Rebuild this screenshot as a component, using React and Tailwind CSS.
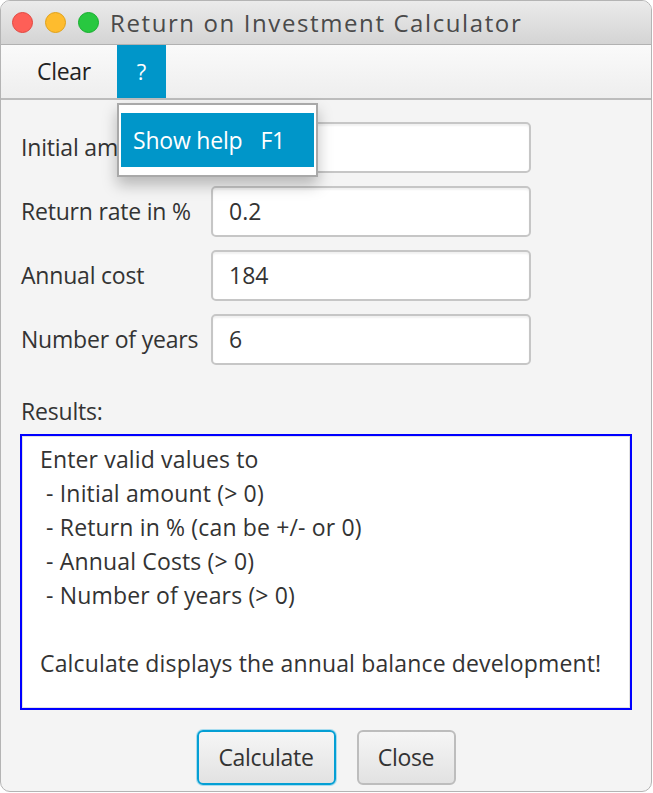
const fields = [
  { label: "Initial amount", value: "1000" },
  { label: "Return rate in %", value: "0.2" },
  { label: "Annual cost", value: "184" },
  { label: "Number of years", value: "6" },
];

const lines = [
  "Enter valid values to",
  " - Initial amount (> 0)",
  " - Return in % (can be +/- or 0)",
  " - Annual Costs (> 0)",
  " - Number of years (> 0)",
  "",
  "Calculate displays the annual balance development!",
];

const App = () => {
  return (
    <div className="w-[653px] h-[793px] bg-white font-['Open_Sans',sans-serif] text-[#333]">
      <div className="relative w-[652px] h-[792px] rounded-[10px] border border-[#b4b4b4] bg-[#f4f4f4] overflow-hidden flex flex-col">

        {/* Title bar */}
        <div className="h-[44px] flex items-center bg-gradient-to-b from-[#ebebeb] to-[#d4d4d4] border-b border-[#b1b1b1] shrink-0">
          <div className="flex items-center gap-[12px] pl-[11px]">
            <span className="w-[21px] h-[21px] rounded-full bg-[#fe5f57] border border-[#e2463f]" />
            <span className="w-[21px] h-[21px] rounded-full bg-[#febc2e] border border-[#e1a116]" />
            <span className="w-[21px] h-[21px] rounded-full bg-[#28c840] border border-[#14ae2c]" />
          </div>
          <span className="ml-[11px] text-[24px] tracking-[1.6px] text-[#4a4a4a]">Return on Investment Calculator</span>
        </div>

        {/* Menu bar */}
        <div className="h-[55px] flex items-stretch bg-gradient-to-b from-[#fafafa] to-[#eeeeee] border-b-2 border-[#bcbcbc] shrink-0">
          <div className="w-[116px] flex items-center pl-[36px] text-[23px] tracking-[-0.3px] text-[#222]">Clear</div>
          <div className="w-[49px] flex items-center justify-center bg-[#0096c9] text-white text-[22px]">?</div>
        </div>

        {/* Form */}
        <div className="flex flex-col gap-[13px] pt-[22px] pl-[20px]">
          {fields.map((f) => (
            <div key={f.label} className="flex items-center h-[51px]">
              <span className="w-[190px] text-[23px] tracking-[-0.2px] text-[#333]">{f.label}</span>
              <div className="w-[320px] h-[51px] flex items-center px-[16px] bg-white border-2 border-[#c6c6c6] rounded-[5px] shadow-[inset_0_2px_2px_rgba(0,0,0,0.06)] text-[23px] text-[#333]">
                {f.value}
              </div>
            </div>
          ))}
        </div>

        <div className="pl-[20px] pt-[33px] text-[23px] tracking-[-0.2px] text-[#333] leading-[26px]">Results:</div>

        <div className="mx-[19px] mt-[10px] h-[276px] border-2 border-[#0000ff] bg-white">
          <div className="h-full border border-[#e2e2e2] pt-[5px] pl-[17px] text-[23px] leading-[34px] tracking-[0.15px] text-[#333] whitespace-pre">
            {lines.map((l, i) => (
              <div key={i} className="h-[34px]">{l}</div>
            ))}
          </div>
        </div>

        <div className="flex justify-center gap-[21px] pt-[20px]">
          <button className="w-[139px] h-[55px] rounded-[6px] border-2 border-[#049fd4] bg-gradient-to-b from-[#f6f6f6] to-[#e2e2e2] shadow-[0_0_0_1px_#a8dcef] text-[23px] tracking-[-0.3px] text-[#333]">
            Calculate
          </button>
          <button className="w-[99px] h-[55px] rounded-[6px] border-2 border-[#bdbdbd] bg-gradient-to-b from-[#f6f6f6] to-[#e2e2e2] text-[23px] tracking-[-0.3px] text-[#333]">
            Close
          </button>
        </div>

        {/* Help menu popup */}
        <div className="absolute left-[116px] top-[102px] w-[201px] h-[74px] bg-white border-2 border-[#a9a9a9] p-[8px_2px] shadow-[0_8px_14px_rgba(0,0,0,0.25)]">
          <div className="h-[54px] bg-[#0096c9] flex items-center pl-[12px] text-white text-[23px] tracking-[-0.2px]">
            <span>Show help</span>
            <span className="ml-[18px]">F1</span>
          </div>
        </div>
      </div>
    </div>
  );
};

export default App;
